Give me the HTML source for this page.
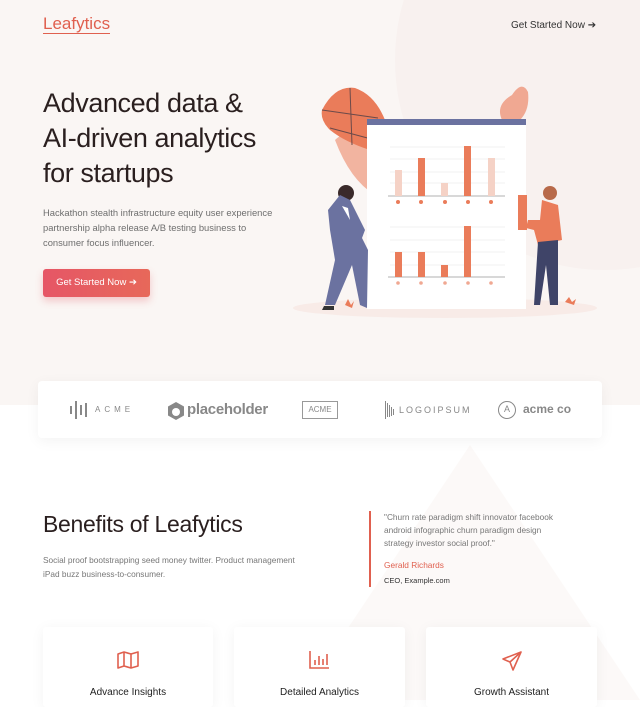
<!DOCTYPE html>
<html><head><meta charset="utf-8">
<style>
*{margin:0;padding:0;box-sizing:border-box}
body{width:640px;height:700px;overflow:hidden;background:#fff;font-family:"Liberation Sans",sans-serif;position:relative}
.hero{position:absolute;left:0;top:0;width:640px;height:405px;background:#faf6f4;overflow:hidden}
.circ{position:absolute;left:395px;top:-150px;width:420px;height:420px;border-radius:50%;background:#f8f1ef}
.abs{position:absolute}
.logo{left:43px;top:15px;font-size:17px;color:#e0604f;letter-spacing:0;border-bottom:1px solid #e0604f;line-height:18px}
.nav{left:511px;top:20px;font-size:10px;color:#333}
h1{position:absolute;left:43px;top:86px;font-size:27px;line-height:35px;font-weight:normal;color:#2a1f1f;letter-spacing:-0.4px}
.p1{left:43px;top:205px;font-size:9.4px;line-height:15px;color:#6e6e6e;width:240px}
.btn{left:43px;top:269px;width:107px;height:28px;border-radius:3px;background:linear-gradient(90deg,#e65666,#e7685a);color:#fff;font-size:9.5px;line-height:28px;text-align:center;box-shadow:0 4px 8px rgba(230,90,100,.3)}
.strip{left:38px;top:381px;width:564px;height:57px;background:#fff;border-radius:4px;box-shadow:0 3px 14px rgba(0,0,0,.05);color:#888}
h2{position:absolute;left:43px;top:511px;font-size:23px;font-weight:normal;color:#2a1f1f;letter-spacing:-0.3px}
.p2{left:43px;top:553px;font-size:8.3px;line-height:14px;color:#777;width:260px}
.q{left:369px;top:511px;width:2px;height:76px;background:#e0604f}
.qt{left:384px;top:511px;font-size:8.3px;line-height:13px;color:#777;width:180px}
.card{top:627px;height:80px;background:#fff;box-shadow:0 2px 14px rgba(0,0,0,.05);border-radius:3px;text-align:center}
.card .t{position:absolute;top:60px;width:100%;font-size:10px;color:#222}
</style></head><body>
<div class="hero"><div class="circ"></div></div>
<svg class="abs" style="left:0;top:405px" width="640" height="295"><polygon points="300,295 470,40 640,295" fill="#fcf9f8"/></svg>
<div class="abs logo">Leafytics</div>
<div class="abs nav">Get Started Now ➔</div>
<h1>Advanced data &amp;<br>AI-driven analytics<br>for startups</h1>
<div class="abs p1">Hackathon stealth infrastructure equity user experience partnership alpha release A/B testing business to consumer focus influencer.</div>
<div class="abs btn">Get Started Now ➔</div>

<svg class="abs" style="left:290px;top:80px" width="330" height="240">
<ellipse cx="155" cy="228" rx="152" ry="10" fill="#f8ebe7"/>
<path d="M45 60 Q60 45 85 62 Q100 90 85 115 Q60 100 45 60Z" fill="#f2b4a0"/>
<path d="M32 30 Q45 5 65 8 Q85 15 95 40 Q90 60 80 70 Q55 62 40 50 Q30 40 32 30Z" fill="#ea7c5a"/>
<path d="M32 30 L88 38 M60 8 L62 65 M40 48 L85 60" stroke="#6b4a4a" stroke-width="1" fill="none"/>
<path d="M222 15 Q232 0 238 12 Q240 30 230 40 L212 40 Q205 25 222 15Z" fill="#f0a892"/>
<rect x="77" y="39" width="159" height="190" fill="#fff"/>
<rect x="77" y="39" width="159" height="6" fill="#6b72a0"/>
<g stroke="#eee" stroke-width="0.8"><line x1="100" y1="67" x2="215" y2="67"/><line x1="100" y1="79" x2="215" y2="79"/><line x1="100" y1="92" x2="215" y2="92"/><line x1="100" y1="103" x2="215" y2="103"/>
<line x1="100" y1="147" x2="215" y2="147"/><line x1="100" y1="160" x2="215" y2="160"/><line x1="100" y1="172" x2="215" y2="172"/><line x1="100" y1="185" x2="215" y2="185"/></g>
<line x1="98" y1="116" x2="215" y2="116" stroke="#999" stroke-width="0.7"/>
<line x1="98" y1="197" x2="215" y2="197" stroke="#999" stroke-width="0.7"/>
<rect x="105" y="90" width="7" height="26" fill="#f5d2c6"/><rect x="128" y="78" width="7" height="38" fill="#ea7c5a"/><rect x="151" y="103" width="7" height="13" fill="#f5d2c6"/><rect x="174" y="66" width="7" height="50" fill="#ea7c5a"/><rect x="198" y="78" width="7" height="38" fill="#f5d2c6"/>
<rect x="105" y="172" width="7" height="25" fill="#ea7c5a"/><rect x="128" y="172" width="7" height="25" fill="#ea7c5a"/><rect x="151" y="185" width="7" height="12" fill="#ea7c5a"/><rect x="174" y="146" width="7" height="51" fill="#ea7c5a"/>
<g fill="#ea7c5a"><circle cx="108" cy="122" r="2"/><circle cx="131" cy="122" r="2"/><circle cx="155" cy="122" r="2"/><circle cx="178" cy="122" r="2"/><circle cx="201" cy="122" r="2"/></g>
<g fill="#f0a892"><circle cx="108" cy="203" r="1.8"/><circle cx="131" cy="203" r="1.8"/><circle cx="155" cy="203" r="1.8"/><circle cx="178" cy="203" r="1.8"/><circle cx="201" cy="203" r="1.8"/></g>
<circle cx="56" cy="113" r="8" fill="#3a2a2a"/>
<path d="M50 115 L60 120 L75 150 L72 158 L78 170 L77 228 L70 225 L62 185 L45 225 L35 225 L45 180 L40 150 L38 130Z" fill="#6b72a0"/>
<path d="M52 126 L58 128 L60 140 Z" fill="#fff"/>
<path d="M34 226 h10 v4 h-12z" fill="#333"/>
<path d="M55 225 l3 -6 l3 6 l3 -4 l-2 7z" fill="#ea7c5a"/>
<circle cx="260" cy="113" r="7" fill="#b86a4a"/>
<rect x="228" y="115" width="9" height="35" fill="#ea7c5a"/>
<path d="M252 120 L268 125 L272 160 L248 165 L244 150 L236 148 L238 140 L250 140Z" fill="#ea7c5a"/>
<path d="M248 162 L268 160 L268 225 L260 225 L256 185 L250 225 L244 225Z" fill="#3f4468"/>
<path d="M275 222 l4 -5 l3 5 l4 -3 l-2 6z" fill="#ea7c5a"/>
</svg>

<div class="abs strip">
<svg class="abs" style="left:32px;top:20px" width="18" height="18"><g fill="#888"><rect x="0" y="5" width="2" height="8"/><rect x="5" y="0" width="2" height="18"/><rect x="10" y="4" width="2" height="10"/><rect x="15" y="2" width="2" height="14"/></g></svg>
<div class="abs" style="left:57px;top:24px;font-size:8px;letter-spacing:4px">ACME</div>
<svg class="abs" style="left:128px;top:20px" width="20" height="20"><path d="M10 1 L18 5.5 V14.5 L10 19 L2 14.5 V5.5Z" fill="#888"/><circle cx="10" cy="11" r="4" fill="#fff"/></svg>
<div class="abs" style="left:149px;top:20px;font-size:15px;font-weight:bold;color:#888;letter-spacing:-0.3px">placeholder</div>
<div class="abs" style="left:264px;top:20px;width:36px;height:18px;border:1px solid #999;font-size:8px;text-align:center;line-height:16px">ACME</div>
<svg class="abs" style="left:347px;top:20px" width="12" height="18"><g fill="#888"><rect x="0" y="0" width="1" height="18"/><rect x="2" y="2" width="1" height="14"/><rect x="4" y="4" width="1" height="12"/><rect x="6" y="6" width="1" height="9"/><rect x="8" y="8" width="1" height="6"/></g></svg>
<div class="abs" style="left:361px;top:24px;font-size:9px;letter-spacing:2px">LOGOIPSUM</div>
<div class="abs" style="left:460px;top:20px;width:18px;height:18px;border:1.5px solid #888;border-radius:50%;font-size:9px;text-align:center;line-height:15px">A</div>
<div class="abs" style="left:485px;top:21px;font-size:12px;font-weight:bold;color:#888">acme co</div>
</div>

<h2>Benefits of Leafytics</h2>
<div class="abs p2">Social proof bootstrapping seed money twitter. Product management iPad buzz business-to-consumer.</div>
<div class="abs q"></div>
<div class="abs qt">"Churn rate paradigm shift innovator facebook android infographic churn paradigm design strategy investor social proof."
<div style="color:#e0604f;margin-top:9px">Gerald Richards</div>
<div style="color:#333;font-size:7.5px;margin-top:2px">CEO, Example.com</div></div>

<div class="abs card" style="left:43px;width:170px">
<svg class="abs" style="left:74px;top:24px" width="22" height="18" fill="none" stroke="#e0604f" stroke-width="1.6" stroke-linejoin="round"><path d="M1 3 L7 1 L14 3 L21 1 V15 L14 17 L7 15 L1 17Z M7 1 V15 M14 3 V17"/></svg>
<div class="t">Advance Insights</div></div>
<div class="abs card" style="left:234px;width:171px">
<svg class="abs" style="left:75px;top:23px" width="21" height="20" fill="none" stroke="#e0604f" stroke-width="1.6"><path d="M1 1 V18 H20 M6 15 V10 M10 15 V6 M14 15 V9 M18 15 V4"/></svg>
<div class="t">Detailed Analytics</div></div>
<div class="abs card" style="left:426px;width:171px">
<svg class="abs" style="left:75px;top:23px" width="22" height="22" fill="none" stroke="#e0604f" stroke-width="1.6" stroke-linejoin="round"><path d="M20 2 L2 9 L9 12 L12 20Z M20 2 L9 12"/></svg>
<div class="t">Growth Assistant</div></div>
</body></html>
